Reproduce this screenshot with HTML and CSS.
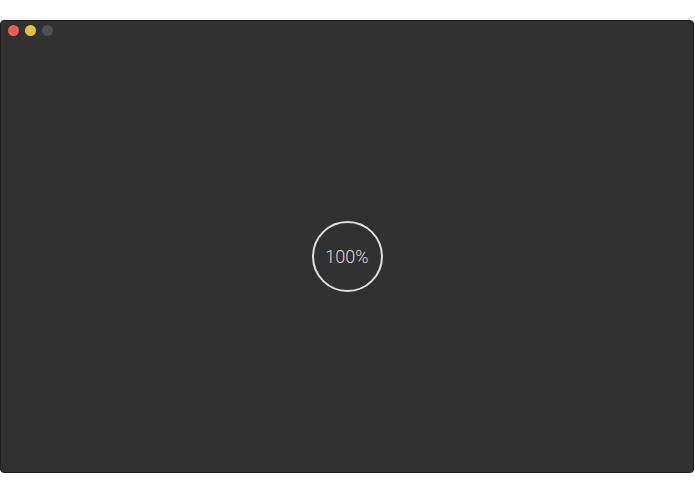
FILE: index.html
```html
<!DOCTYPE html>
<html>
<head>
<meta charset="utf-8">
<link rel="stylesheet" href="styles.css">
</head>
<body>
<div class="window">
  <div class="titlebar">
    <span class="dot red"></span>
    <span class="dot yellow"></span>
    <span class="dot gray"></span>
  </div>
  <div class="content">
    <div class="progress">100%</div>
  </div>
</div>
</body>
</html>
```
FILE: styles.css
```css
html, body {
  margin: 0;
  padding: 0;
  background: #ffffff;
}
body {
  padding-top: 20px;
  width: 695px;
  height: 494px;
  box-sizing: border-box;
}
.window {
  width: 694px;
  height: 453px;
  background: #313131;
  border: 1px solid #1e1e1e;
  border-radius: 4px;
  box-sizing: border-box;
  display: flex;
  flex-direction: column;
}
.titlebar {
  height: 19px;
  display: flex;
  align-items: center;
  gap: 6px;
  padding-left: 7px;
}
.dot {
  width: 11px;
  height: 11px;
  border-radius: 50%;
}
.red { background: #ec5f57; }
.yellow { background: #e4c03f; }
.gray { background: #505050; }
.content {
  flex: 1;
  display: flex;
  align-items: center;
  justify-content: center;
}
.progress {
  width: 71px;
  height: 71px;
  box-sizing: border-box;
  border: 2px solid #dedede;
  border-radius: 50%;
  display: flex;
  align-items: center;
  justify-content: center;
  color: #d8d8d8;
  font-family: Roboto, "Liberation Sans", sans-serif;
  font-weight: 300;
  font-size: 18px;
}
```
